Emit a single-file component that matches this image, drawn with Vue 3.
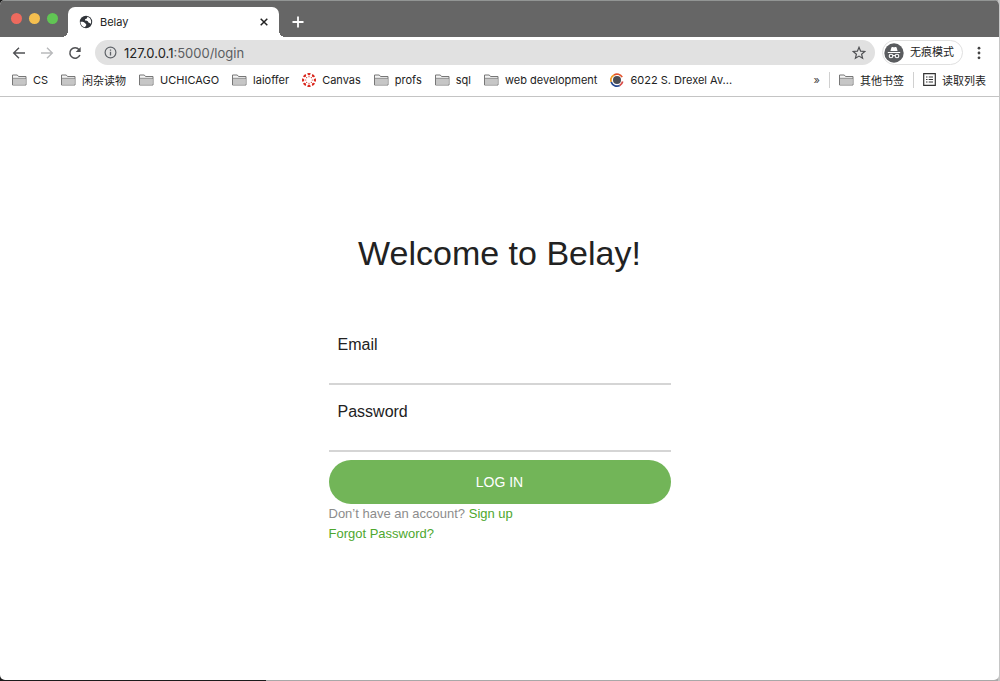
<script setup>
import { ref } from 'vue'

const bookmarks = [
  { label: 'CS', icon: 'folder' },
  { label: '闲杂读物', icon: 'folder' },
  { label: 'UCHICAGO', icon: 'folder' },
  { label: 'laioffer', icon: 'folder' },
  { label: 'Canvas', icon: 'canvas' },
  { label: 'profs', icon: 'folder' },
  { label: 'sql', icon: 'folder' },
  { label: 'web development', icon: 'folder' },
  { label: '6022 S. Drexel Av...', icon: 'ring' },
]
const spokes = [0, 45, 90, 135, 180, 225, 270, 315]
const email = ref('')
const password = ref('')
</script>

<template>
  <div class="desktop">
    <div class="window">
      <header>
        <div class="tabs">
          <div class="lights">
            <button class="light red" aria-label="Close window"></button>
            <button class="light yellow" aria-label="Minimize window"></button>
            <button class="light green" aria-label="Zoom window"></button>
          </div>
          <div class="tab">
            <svg width="14" height="14" viewBox="0 0 14 14">
              <circle cx="7" cy="7" r="6.2" fill="#30343a" />
              <path d="M1.500 6.800C3 6.600 5 6.700 5.900 8c.6.9 1.600.9 1.400 2.100-.1.900-1 1-1.200 2.200C3.600 12 1.400 9.800 1.500 6.800z" fill="#fff" />
              <path d="M8.300 1.800c-.3.900.1 1.300-.6 1.800-.8.500-1.700.4-1.700 1.300.1.900 1.600.5 2.500 1.100.9.500.5 1.700 1.500 1.800.9.100 1.100.8 1.900.9.900-2.700-.4-6-3.600-6.900z" fill="#fff" />
            </svg>
            <span class="title">Belay</span>
            <button class="plain" aria-label="Close tab">
              <svg width="10" height="10" viewBox="0 0 10 10"><path d="M1.700 1.700l6.600 6.600M8.300 1.700L1.700 8.300" stroke="#222" stroke-width="1.500" /></svg>
            </button>
          </div>
          <button class="plain new" aria-label="New tab">
            <svg width="12" height="12" viewBox="0 0 12 12"><path d="M6 .5v11M.5 6h11" stroke="#fff" stroke-width="1.800" /></svg>
          </button>
        </div>

        <div class="toolbar">
          <nav class="history" aria-label="History">
            <button class="plain" aria-label="Back">
              <svg width="14" height="14" viewBox="0 0 14 14"><path d="M13 7H2M7 1.700L1.700 7 7 12.300" fill="none" stroke="#505154" stroke-width="1.400" /></svg>
            </button>
            <button class="plain" aria-label="Forward">
              <svg width="14" height="14" viewBox="0 0 14 14"><path d="M1 7h11M7 1.700L12.300 7 7 12.300" fill="none" stroke="#b9babc" stroke-width="1.400" /></svg>
            </button>
            <button class="plain" aria-label="Reload">
              <svg width="14" height="14" viewBox="0 0 14 14"><path d="M11.900 9a5.200 5.200 0 1 1-.8-5.300" fill="none" stroke="#505154" stroke-width="1.500" /><path d="M12.700 1v5H7.700z" fill="#505154" /></svg>
            </button>
          </nav>
          <div class="address">
            <svg width="13" height="13" viewBox="0 0 13 13"><circle cx="6.500" cy="6.500" r="5.400" fill="none" stroke="#5f6368" stroke-width="1.200" /><path d="M6.500 5.800v3.700M6.500 3.400v1.300" stroke="#5f6368" stroke-width="1.300" /></svg>
            <span class="url"><b>127.0.0.1</b>:5000/login</span>
            <button class="plain" aria-label="Bookmark this page">
              <svg width="14" height="14" viewBox="0 0 14 14"><path d="M7 1.300l1.600 3.900 4.200.3-3.200 2.700 1 4.100L7 10.100l-3.600 2.200 1-4.100L1.200 5.500l4.200-.3z" fill="none" stroke="#505154" stroke-width="1.200" /></svg>
            </button>
          </div>
          <button class="incognito">
            <svg width="20" height="20" viewBox="0 0 20 20">
              <circle cx="10" cy="10" r="9.700" fill="#5a5c5f" />
              <path d="M6.400 8l1-3.500c.2-.6.700-.7 1.200-.5.900.4 1.900.4 2.800 0 .5-.2 1-.1 1.200.5l1 3.500z" fill="#fff" />
              <path d="M3.800 9.500h12.400" stroke="#fff" stroke-width="1.200" />
              <g fill="none" stroke="#fff" stroke-width="1.100"><circle cx="7" cy="13" r="1.800" /><circle cx="13" cy="13" r="1.800" /><path d="M8.800 12.800q1.200-.7 2.400 0" /></g>
            </svg>
            <span>无痕模式</span>
          </button>
          <button class="plain" aria-label="Menu">
            <svg width="4" height="14" viewBox="0 0 4 14" fill="#444"><circle cx="2" cy="2.200" r="1.400" /><circle cx="2" cy="7" r="1.400" /><circle cx="2" cy="11.800" r="1.400" /></svg>
          </button>
        </div>

        <nav class="bookmarks" aria-label="Bookmarks">
          <a v-for="b in bookmarks" :key="b.label" href="#">
            <svg v-if="b.icon === 'folder'" width="15" height="12" viewBox="0 0 15 12"><path d="M.5 11V1h4.800l1.200 1.500h7.500V11z" fill="#f4f4f4" stroke="#777" /><path d="M1 4.500h12.500v6H1z" fill="#c6c6c6" /><path d="M.5 4.300h13.500" stroke="#777" stroke-width=".8" /></svg>
            <svg v-else-if="b.icon === 'canvas'" width="14" height="14" viewBox="0 0 14 14" fill="#d9281e">
              <g v-for="s in spokes" :key="s" :transform="`rotate(${s} 7 7)`"><path d="M5.200.3Q7-.3 8.800.3 8.400 2.400 7 2.400T5.200.3z" /><circle cx="7" cy="3.700" r=".6" /></g>
            </svg>
            <svg v-else width="14" height="14" viewBox="0 0 14 14" fill="none" stroke-width="1.700">
              <circle cx="7" cy="7" r="4" fill="#4b4d55" />
              <path d="M1.200 9A6 6 0 0 1 4 1.900" stroke="#ef9b22" /><path d="M4 1.900a6 6 0 0 1 8.200 2.200" stroke="#e3532d" /><path d="M12.700 8.500a6 6 0 0 1-3 3.900" stroke="#d84945" /><path d="M9.700 12.400A6 6 0 0 1 1.200 9" stroke="#20438d" />
            </svg>
            <span>{{ b.label }}</span>
          </a>
          <div class="right">
            <button class="plain more" aria-label="More bookmarks">»</button>
            <a class="divided" href="#">
              <svg width="15" height="12" viewBox="0 0 15 12"><path d="M.5 11V1h4.800l1.200 1.500h7.500V11z" fill="#f4f4f4" stroke="#777" /><path d="M1 4.500h12.500v6H1z" fill="#c6c6c6" /><path d="M.5 4.300h13.500" stroke="#777" stroke-width=".8" /></svg>
              <span>其他书签</span>
            </a>
            <a class="divided" href="#">
              <svg width="13" height="13" viewBox="0 0 13 13"><path d="M.7.7h11.600v11.600H.7z" fill="none" stroke="#333" stroke-width="1.200" /><path d="M3 4h1.500M3 6.500h1.500M3 9h1.500M5.700 4H10M5.700 6.500H10M5.700 9H10" stroke="#333" stroke-width="1.200" /></svg>
              <span>读取列表</span>
            </a>
          </div>
        </nav>
      </header>

      <main>
        <h1>Welcome to Belay!</h1>
        <form @submit.prevent>
          <div class="field">
            <label for="email">Email</label>
            <input id="email" v-model="email" type="email" />
          </div>
          <div class="field">
            <label for="password">Password</label>
            <input id="password" v-model="password" type="password" />
          </div>
          <button class="login" type="submit">LOG IN</button>
          <p>Don’t have an account? <a href="#">Sign up</a></p>
          <p><a href="#">Forgot Password?</a></p>
        </form>
      </main>
    </div>
  </div>
</template>

<style>
body { margin: 0; }
</style>

<style scoped>
* { box-sizing: border-box; }
.desktop {
  min-height: 100vh;
  display: flex;
  padding: 0 1px 1px 0;
  background: linear-gradient(90deg, #1c1c1c 266px, #a8a8a8 266px, #a8a8a8 calc(100% - 2px), #c6c6c6 calc(100% - 2px));
  font-family: Inter, "Noto Sans CJK SC", sans-serif;
  color: #222;
}
.window {
  flex: 1;
  min-width: 0;
  display: flex;
  flex-direction: column;
  background: #fff;
  border-radius: 5px;
  overflow: hidden;
}
button { font-family: inherit; cursor: pointer; }
a { text-decoration: none; }
svg { display: block; flex: none; }
.plain {
  display: flex;
  padding: 0;
  border: 0;
  background: none;
  color: inherit;
}
header { border-bottom: 1px solid #c4c4c4; }
.tabs {
  display: flex;
  height: 37px;
  background: #666;
  border-top: 1px solid #929594;
}
.lights { display: flex; gap: 7px; padding: 12px 10px 0 11px; }
.light { width: 11px; height: 11px; padding: 0; border: 0; border-radius: 50%; }
.red { background: #ed6a5e; }
.yellow { background: #f5bf4f; }
.green { background: #61c554; }
.tab {
  position: relative;
  display: flex;
  align-items: center;
  gap: 7px;
  width: 211px;
  margin-top: 6px;
  padding: 0 10px 0 11px;
  background: #fff;
  border-radius: 7px 7px 0 0;
  font-size: 11px;
}
.tab::before, .tab::after {
  content: "";
  position: absolute;
  bottom: 0;
  width: 6px;
  height: 6px;
}
.tab::before { right: 100%; background: radial-gradient(circle at 0 0, #666 6px, #fff 6px); }
.tab::after { left: 100%; background: radial-gradient(circle at 100% 0, #666 6px, #fff 6px); }
.title { flex: 1; }
.new { align-self: center; margin-left: 13px; margin-top: 6px; }
.toolbar {
  display: flex;
  align-items: center;
  height: 31px;
  padding-right: 18px;
}
.history { display: flex; gap: 14px; padding: 0 13px 0 12px; }
.address {
  flex: 1;
  display: flex;
  align-items: center;
  gap: 7px;
  height: 25px;
  padding: 0 9px;
  border-radius: 13px;
  background: #e1e1e1;
  font-size: 13px;
  color: #5b5e62;
}
.url { flex: 1; }
.url b { font-weight: 400; color: #222; }
.incognito {
  display: flex;
  align-items: center;
  gap: 6px;
  height: 25px;
  margin: 0 14px 0 7px;
  padding: 0 8px 0 1px;
  border: 1px solid #e0e0e0;
  border-radius: 13px;
  background: #fff;
  color: #222;
  font-size: 11px;
}
.incognito span { line-height: 20px; padding-bottom: 2px; }
.bookmarks {
  display: flex;
  align-items: center;
  gap: 13px;
  height: 28px;
  padding: 0 13px 5px 12px;
  font-size: 11px;
  white-space: nowrap;
}
.bookmarks a { display: flex; align-items: center; gap: 6px; color: #222; }
.right { display: flex; align-items: center; gap: 9px; margin-left: auto; }
.more { font-size: 11px; color: #444; }
.bookmarks .divided { padding-left: 9px; border-left: 1px solid #d0d0d0; }
main {
  flex: 1;
  padding: 136px 16px 0;
  font-family: "Liberation Sans", Arial, sans-serif;
}
h1 {
  margin: 0;
  font-size: 34px;
  line-height: 40px;
  font-weight: 400;
  text-align: center;
}
form { width: 100%; max-width: 342px; margin: 62px auto 0; }
.field { display: flex; flex-direction: column; height: 67px; }
label { padding-left: 9px; font-size: 16px; line-height: 20px; }
input {
  width: 100%;
  height: 30px;
  padding: 0 9px;
  border: 0;
  border-bottom: 2px solid #d5d5d5;
  background: none;
  font: 16px "Liberation Sans", Arial, sans-serif;
}
.login {
  display: block;
  width: 100%;
  height: 44px;
  margin-top: -9px;
  border: 0;
  border-radius: 22px;
  background: #72b558;
  color: #fff;
  font-size: 14px;
}
p { margin: 0; font-size: 13px; line-height: 20px; color: #8c8c8c; }
p a { color: #4ea72e; }
</style>
